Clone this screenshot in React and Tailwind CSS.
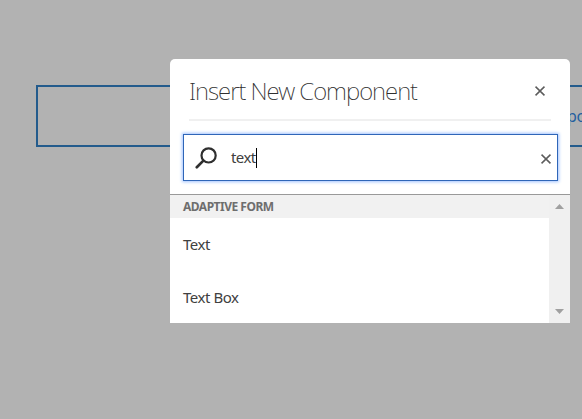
import React from 'react';

function CloseIcon() {
  return (
    <svg width="10" height="10" viewBox="0 0 10 10" fill="none" stroke="#5c5c5c" strokeWidth="1.6">
      <path d="M0.5 0.7 9.5 9.3M9.5 0.7 0.5 9.3" />
    </svg>
  );
}

function SearchIcon() {
  return (
    <svg width="22" height="22" viewBox="0 0 22 22" fill="none" stroke="#2f2f2f">
      <circle cx="13.6" cy="8.4" r="7.1" strokeWidth="2.2" />
      <path d="M8.4 13.6 1.8 20.2" strokeWidth="2.7" strokeLinecap="round" />
    </svg>
  );
}

function ResultRow({ label }) {
  return (
    <li className="flex h-[53px] items-center pl-[13px] text-[15px] tracking-[-0.45px] text-[#404040]">
      {label}
    </li>
  );
}

function ScrollBar() {
  return (
    <div className="flex w-[21px] shrink-0 flex-col items-end justify-between bg-[#f0f0f0] pt-[9px] pr-[6px] pb-[9px]">
      <svg width="9" height="5" viewBox="0 0 9 5" fill="#a0a0a0"><path d="M0 5 4.5 0 9 5z" /></svg>
      <svg width="9" height="5" viewBox="0 0 9 5" fill="#a0a0a0"><path d="M0 0 4.5 5 9 0z" /></svg>
    </div>
  );
}

export default function App() {
  return (
    <div className="relative h-[419px] w-[582px] overflow-hidden bg-[#b2b2b2] pt-[85px] pl-9 font-['Noto_Sans',sans-serif]">
      <div className="flex h-[62px] w-[620px] items-center border-2 border-[#235b8c] pl-[529px] text-[16px] tracking-[-0.4px] whitespace-nowrap text-[#2460a0]">
        po
      </div>
      <section className="absolute top-[59px] left-[170px] flex h-[264px] w-[400px] flex-col overflow-hidden rounded-t-[5px] bg-white">
        <header className="mr-[19px] ml-[19px] flex h-[62px] shrink-0 items-center justify-between border-b-2 border-[#f0f0f0] pt-[3px] pr-[6px]">
          <h1 className="text-[24px] font-extralight tracking-[-1px] whitespace-nowrap text-[#303030]">Insert New Component</h1>
          <span className="mt-px"><CloseIcon /></span>
        </header>
        <div className="mt-[13px] ml-[13px] flex h-[47px] w-[375px] shrink-0 items-center border border-[#2f66b8] pr-[6px] pl-[11px] shadow-[0_0_3px_1px_#a0c3ff]">
          <SearchIcon />
          <span className="ml-[14px] text-[15px] tracking-[-0.6px] text-[#404040]">text</span>
          <span className="h-[20px] w-px bg-black" />
          <span className="mt-[3px] ml-auto"><CloseIcon /></span>
        </div>
        <div className="mt-[13px] flex min-h-0 flex-1 border-t border-[#999]">
          <div className="min-w-0 flex-1">
            <h2 className="flex h-[23px] items-center bg-[#f1f1f1] pl-[13px] text-[12px] font-bold tracking-[-0.5px] text-[#6e6e6e]">
              ADAPTIVE FORM
            </h2>
            <ul>
              <ResultRow label="Text" />
              <ResultRow label="Text Box" />
            </ul>
          </div>
          <ScrollBar />
        </div>
      </section>
    </div>
  );
}
